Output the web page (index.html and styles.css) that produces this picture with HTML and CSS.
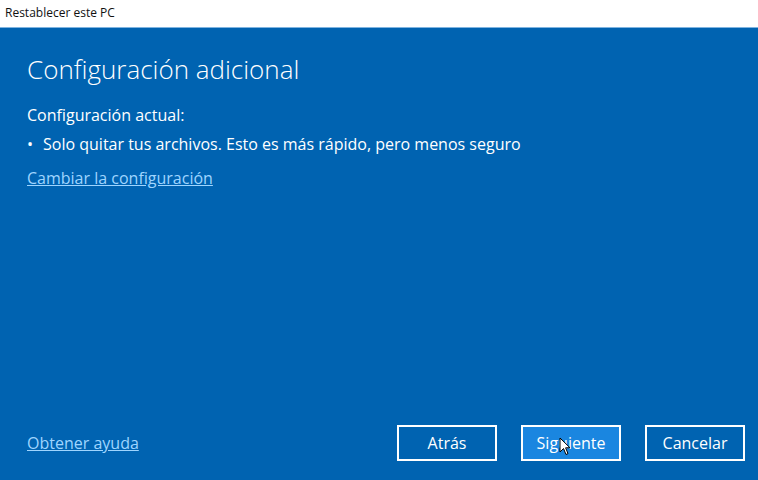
FILE: index.html
```html
<!DOCTYPE html>
<html lang="es">
  <head>
    <meta charset="UTF-8" />
    <title>Restablecer este PC</title>
    <link rel="stylesheet" href="styles.css">
  </head>
  <body>
    <div class="titlebar">Restablecer este PC</div>

    <div class="panel">
      <h1>Configuración adicional</h1>
      <p class="label">Configuración actual:</p>
      <ul class="settings">
        <li>Solo quitar tus archivos. Esto es más rápido, pero menos seguro</li>
      </ul>
      <a class="link" href="#">Cambiar la configuración</a>

      <div class="footer">
        <a class="link" href="#">Obtener ayuda</a>
        <div class="buttons">
          <button>Atrás</button>
          <button class="hover">Siguiente
            <!-- mouse pointer -->
            <svg class="cursor" width="12" height="19" viewBox="0 0 12 19">
              <path d="M1 1 L1 15 L4.5 11.5 L7 17.5 L9 16.6 L6.6 10.8 L11 10.8 Z" fill="#fff" stroke="#000" stroke-width="1" />
            </svg>
          </button>
          <button>Cancelar</button>
        </div>
      </div>
    </div>
  </body>
</html>
```

FILE: styles.css
```css
html,
body {
  height: 100%;
}

body {
  margin: 0;
  display: flex;
  flex-direction: column;
  font-family: "Open Sans", "Noto Sans", sans-serif;
  background-color: #0063b1;
}

.titlebar {
  height: 27px;
  padding-left: 5px;
  line-height: 26px;
  font-size: 12px;
  color: #111;
  background-color: #fff;
  border-bottom: 1px solid #7fb4e0;
}

.panel {
  flex: 1;
  display: flex;
  flex-direction: column;
  padding: 0 13px 19px 27px;
  color: #fff;
}

h1 {
  margin: 23px 0 0;
  font-size: 26px;
  font-weight: 300;
  line-height: 36px;
}

.label {
  margin: 17px 0 0;
  font-size: 16px;
  line-height: 22px;
}

.settings {
  margin: 7px 0 0;
  padding: 0;
  list-style: none;
  font-size: 16px;
  line-height: 22px;
}

.settings li::before {
  content: "\2022";
  margin-right: 10px;
}

.link {
  align-self: flex-start;
  margin-top: 12px;
  font-size: 16px;
  line-height: 22px;
  color: #9fd5ff;
}

.footer {
  margin-top: auto;
  display: flex;
  justify-content: space-between;
  align-items: center;
}

.footer .link {
  margin-top: 0;
  align-self: center;
}

.buttons {
  display: flex;
  gap: 24px;
}

button {
  position: relative;
  width: 100px;
  height: 36px;
  font-family: inherit;
  font-size: 16px;
  color: #fff;
  background-color: #0063b1;
  border: 2px solid #fff;
  cursor: pointer;
}

button.hover {
  background-color: #1a86e0;
}

.cursor {
  position: absolute;
  left: 36px;
  top: 10px;
}
```
